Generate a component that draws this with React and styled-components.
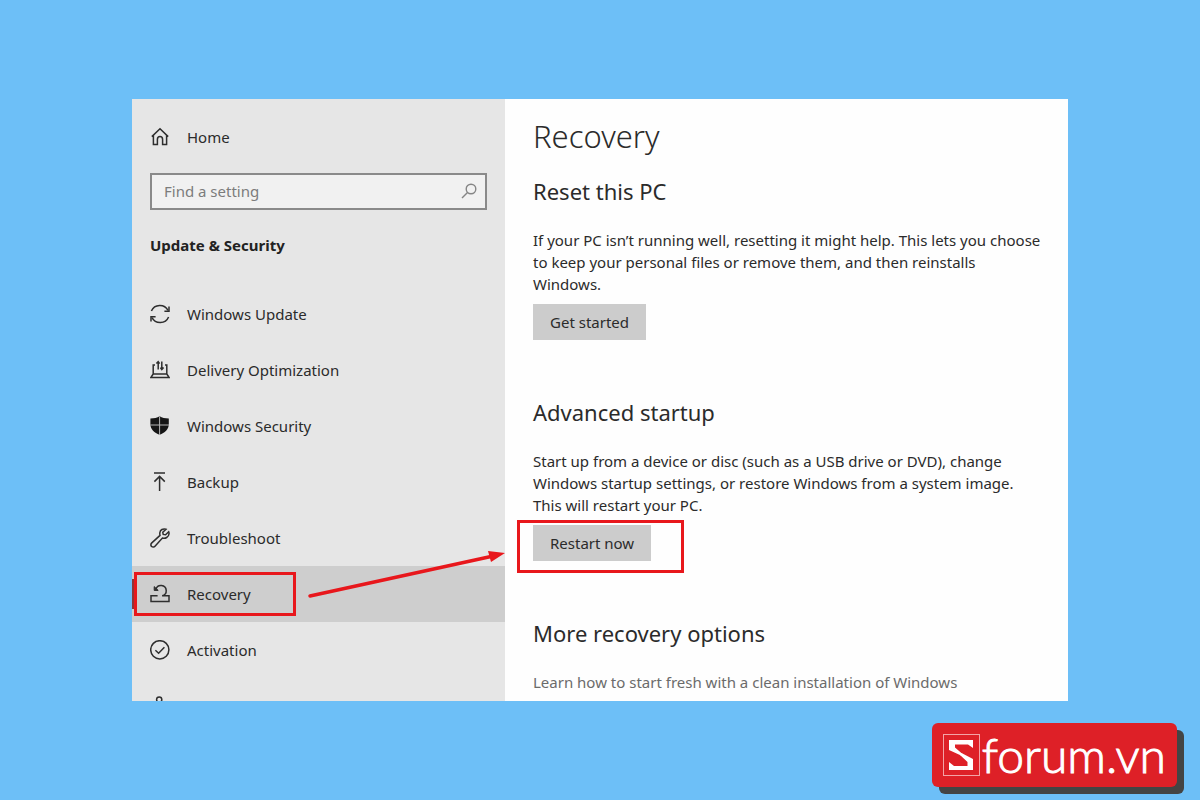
import React from 'react';
import styled, { createGlobalStyle } from 'styled-components';

const GlobalStyle = createGlobalStyle`
    * {
        box-sizing: border-box;
    }
    body {
        margin: 0;
        background: #6dbff7;
        font-family: "Noto Sans", "Open Sans", sans-serif;
        color: #2b2b2b;
    }
    h1, h2, p {
        margin: 0;
    }
`;

const HomeIcon = () => (
    <Icon viewBox="0 0 20 20">
        <path d="M1.8 9.6 L10 1.8 L18.2 9.6 M3.4 8.2 V17.4 H7.4 V12.4 Q7.4 9.6 10 9.6 Q12.6 9.6 12.6 12.4 V17.4 H16.6 V8.2" />
    </Icon>
);

const UpdateIcon = () => (
    <Icon viewBox="0 0 20 20">
        <path d="M1.4 7 A9.2 9.2 0 0 1 18 6.4 M18.6 13 A9.2 9.2 0 0 1 2 13.6" />
        <path d="M19 2.6 V7.2 H14.4 M1 17.4 V12.8 H5.6" />
    </Icon>
);

const DeliveryIcon = () => (
    <Icon viewBox="0 0 20 20">
        <path d="M5 5 H3.2 V14 H16.8 V5 H15 M3.2 14 L1 17.4 H19 L16.8 14" />
        <path d="M8.2 9.6 V1.6 M6.4 3.6 L8.2 1.6 L9.6 3.6 M11.8 1.6 V9.6 M10.4 7.6 L11.8 9.6 L13.6 7.6" />
    </Icon>
);

const SecurityIcon = () => (
    <Icon viewBox="0 0 20 20">
        <path
            d="M9.6 0.2 C7.2 2 4.2 2.4 0.4 2.4 V8 C0.4 13.4 4.4 16.8 9.6 18.8 C14.8 16.8 18.8 13.4 18.8 8 V2.4 C15 2.4 12 2 9.6 0.2 Z"
            fill="#161616"
            stroke="none"
        />
        <path d="M9.6 0.4 V19 M0.4 9 H19" stroke="#b5b5b5" strokeWidth="1" />
    </Icon>
);

const BackupIcon = () => (
    <Icon viewBox="0 0 20 20">
        <path d="M4 1 H15 M9.6 19 V4.4 M4.4 9.6 L9.6 4.4 L14.8 9.6" />
    </Icon>
);

const WrenchIcon = () => (
    <Icon viewBox="0 0 20 20">
        <path d="M16 1.2 C13 0.2 10.2 1.8 9.8 4.8 C9.7 5.8 9.8 6.6 10 7.4 L1.8 14.9 C0.6 16 0.6 17.6 1.6 18.5 C2.6 19.4 4.1 19.3 5 18.2 L12.4 10 C15.4 11 18.6 9 19 6 C19.1 5.2 19 4.5 18.7 3.8 L15.6 6.8 L13.2 6.4 L12.8 4.3 Z" />
    </Icon>
);

const RecoveryIcon = () => (
    <Icon viewBox="0 0 20 20">
        <path d="M7.6 11.8 H1 V17.6 H19 V11.8 H12.4" />
        <path d="M12.2 11.8 A5.2 5.2 0 1 0 6 5.4" />
        <path d="M4.2 2.6 V6.4 H8.2 Z" fill="#2e2e2e" strokeWidth="1" />
    </Icon>
);

const ActivationIcon = () => (
    <Icon viewBox="0 0 20 20">
        <circle cx="9.8" cy="9.8" r="9.1" />
        <path d="M5.4 10.2 L8.6 13.2 L14.4 7.2" />
    </Icon>
);

const DeviceIcon = () => (
    <Icon viewBox="0 0 20 20">
        <circle cx="9.2" cy="3.6" r="2.6" />
        <path d="M9.2 6.2 V14" />
    </Icon>
);

const links = [
    { name: 'Windows Update', icon: <UpdateIcon /> },
    { name: 'Delivery Optimization', icon: <DeliveryIcon /> },
    { name: 'Windows Security', icon: <SecurityIcon /> },
    { name: 'Backup', icon: <BackupIcon /> },
    { name: 'Troubleshoot', icon: <WrenchIcon /> },
    { name: 'Recovery', icon: <RecoveryIcon />, active: true },
    { name: 'Activation', icon: <ActivationIcon /> },
];

const Sidebar = () => (
    <Side>
        <NavLink href="#home">
            <HomeIcon />
            Home
        </NavLink>
        <Search>
            <input type="text" aria-label="Find a setting" placeholder="Find a setting" />
            <SearchIcon viewBox="0 0 16 16">
                <circle cx="10" cy="6" r="4.8" />
                <path d="M6.5 9.5 L1 15" />
            </SearchIcon>
        </Search>
        <SideTitle>Update &amp; Security</SideTitle>
        <nav>
            {links.map(link => (
                <NavLink key={link.name} href="#settings" $active={link.active}>
                    {link.icon}
                    {link.name}
                    {link.active && (
                        <>
                            <ActiveBar />
                            <NavFrame />
                            <Arrow viewBox="0 0 198 52">
                                <path d="M3 47 L184 7.5" />
                                <polygon points="198,4 181,2 184,13" />
                            </Arrow>
                        </>
                    )}
                </NavLink>
            ))}
            {/* next entry, only its top edge is in view */}
            <CutRow>
                <NavLink href="#device" aria-label="Find my device">
                    <DeviceIcon />
                </NavLink>
            </CutRow>
        </nav>
    </Side>
);

const Content = () => (
    <Main>
        <Title>Recovery</Title>
        <section>
            <Heading>Reset this PC</Heading>
            <Text>
                If your PC isn’t running well, resetting it might help. This lets you choose<br />
                to keep your personal files or remove them, and then reinstalls<br />
                Windows.
            </Text>
            <Button type="button">Get started</Button>
        </section>
        <section>
            <Heading>Advanced startup</Heading>
            <Text>
                Start up from a device or disc (such as a USB drive or DVD), change<br />
                Windows startup settings, or restore Windows from a system image.<br />
                This will restart your PC.
            </Text>
            <Framed>
                <Button type="button">Restart now</Button>
            </Framed>
        </section>
        <section>
            <Heading>More recovery options</Heading>
            <TextLink href="#fresh">Learn how to start fresh with a clean installation of Windows</TextLink>
        </section>
    </Main>
);

const App = () => (
    <Page>
        <GlobalStyle />
        <Window>
            <Sidebar />
            <Content />
        </Window>
        <Footer>
            <Brand>
                <BrandMark viewBox="0 0 37 42">
                    <rect x="0.5" y="0.5" width="36" height="41" fill="none" stroke="#f3a3a6" />
                    <path d="M6 6 H30 V14 L25 10.5 H12 V13.5 L19.5 20 L18 21.5 L6 16 Z" fill="#fff" />
                    <path d="M18.5 19 L30 25 V36 H6 V28 L11 32 H24.5 V28 L17 21 Z" fill="#fff" />
                </BrandMark>
                forum.vn
            </Brand>
        </Footer>
    </Page>
);

export default App;

const Page = styled.div`
    min-height: 100vh;
    padding-top: 99px;
    overflow: hidden;
`;

const Window = styled.div`
    display: flex;
    width: 78%;
    margin: 0 auto;
    background: #fefefe;
`;

const Side = styled.aside`
    flex: 0 0 373px;
    padding-top: 10px;
    background: #e6e6e6;
`;

const Icon = styled.svg`
    flex: none;
    width: 20px;
    height: 20px;
    fill: none;
    stroke: #2e2e2e;
    stroke-width: 1.5;
`;

const NavLink = styled.a`
    position: relative;
    display: flex;
    align-items: center;
    gap: 17px;
    height: 56px;
    padding: 0 18px;
    font-size: 15px;
    color: #2b2b2b;
    text-decoration: none;
    background: ${props => (props.$active ? '#cecece' : 'transparent')};
`;

const ActiveBar = styled.span`
    position: absolute;
    top: 13px;
    bottom: 13px;
    left: 0;
    width: 4px;
    background: #8f3538;
`;

const NavFrame = styled.span`
    position: absolute;
    top: 6px;
    bottom: 6px;
    left: 2px;
    width: 162px;
    border: 3px solid #e8171c;
`;

const Arrow = styled.svg`
    position: absolute;
    top: -17px;
    right: 0;
    width: 198px;
    height: 52px;
    fill: #e8171c;

    path {
        stroke: #e8171c;
        stroke-width: 3.5;
        stroke-linecap: round;
    }
`;

const CutRow = styled.div`
    height: 23px;
    overflow: hidden;
`;

const Search = styled.div`
    display: flex;
    align-items: center;
    height: 37px;
    margin: 8px 18px 0;
    padding: 0 8px 2px 12px;
    border: 2px solid #8a8a8a;
    background: #f1f1f1;

    input {
        flex: 1;
        min-width: 0;
        padding: 0;
        border: 0;
        outline: 0;
        background: none;
        font-family: inherit;
        font-size: 15px;
        color: #333;
    }
    input::placeholder {
        color: #7c7c7c;
        opacity: 1;
    }
`;

const SearchIcon = styled.svg`
    width: 16px;
    height: 16px;
    fill: none;
    stroke: #858585;
    stroke-width: 1.4;
`;

const SideTitle = styled.h2`
    margin: 23px 18px 29px;
    font-size: 15px;
    line-height: 24px;
    font-weight: 700;
    color: #222;
`;

const Main = styled.main`
    flex: 1;
    min-width: 0;
    padding: 17px 0 8px 28px;

    section + section {
        margin-top: 56px;
    }
`;

const Title = styled.h1`
    margin-bottom: 19px;
    font-size: 31px;
    line-height: 40px;
    font-weight: 300;
`;

const Heading = styled.h2`
    margin-bottom: 22px;
    font-size: 22px;
    line-height: 32px;
    font-weight: 400;
`;

const Text = styled.p`
    margin-bottom: 9px;
    font-size: 15px;
    line-height: 22px;
    white-space: nowrap;
`;

const TextLink = styled.a`
    display: block;
    font-size: 15px;
    line-height: 22px;
    color: #6b6b6b;
    text-decoration: none;
`;

const Button = styled.button`
    display: block;
    height: 36px;
    padding: 0 17px;
    border: 0;
    background: #cccccc;
    font-family: inherit;
    font-size: 15px;
    color: #2b2b2b;
`;

const Framed = styled.div`
    position: relative;
    width: fit-content;

    &::after {
        content: '';
        position: absolute;
        top: -5px;
        right: -33px;
        bottom: -12px;
        left: -16px;
        border: 3px solid #e8171c;
    }
`;

const Footer = styled.footer`
    display: flex;
    justify-content: flex-end;
    padding: 22px 23px 13px 0;
`;

const Brand = styled.div`
    display: flex;
    align-items: center;
    gap: 2px;
    height: 64px;
    padding: 0 11px;
    border-radius: 6px;
    background: #de2027;
    box-shadow: 7px 7px 0 #444;
    font-family: Lato, sans-serif;
    font-size: 48px;
    font-weight: 300;
    line-height: 64px;
    color: #fff;
    -webkit-text-stroke: 1px #fff;
`;

const BrandMark = styled.svg`
    width: 37px;
    height: 42px;
`;
